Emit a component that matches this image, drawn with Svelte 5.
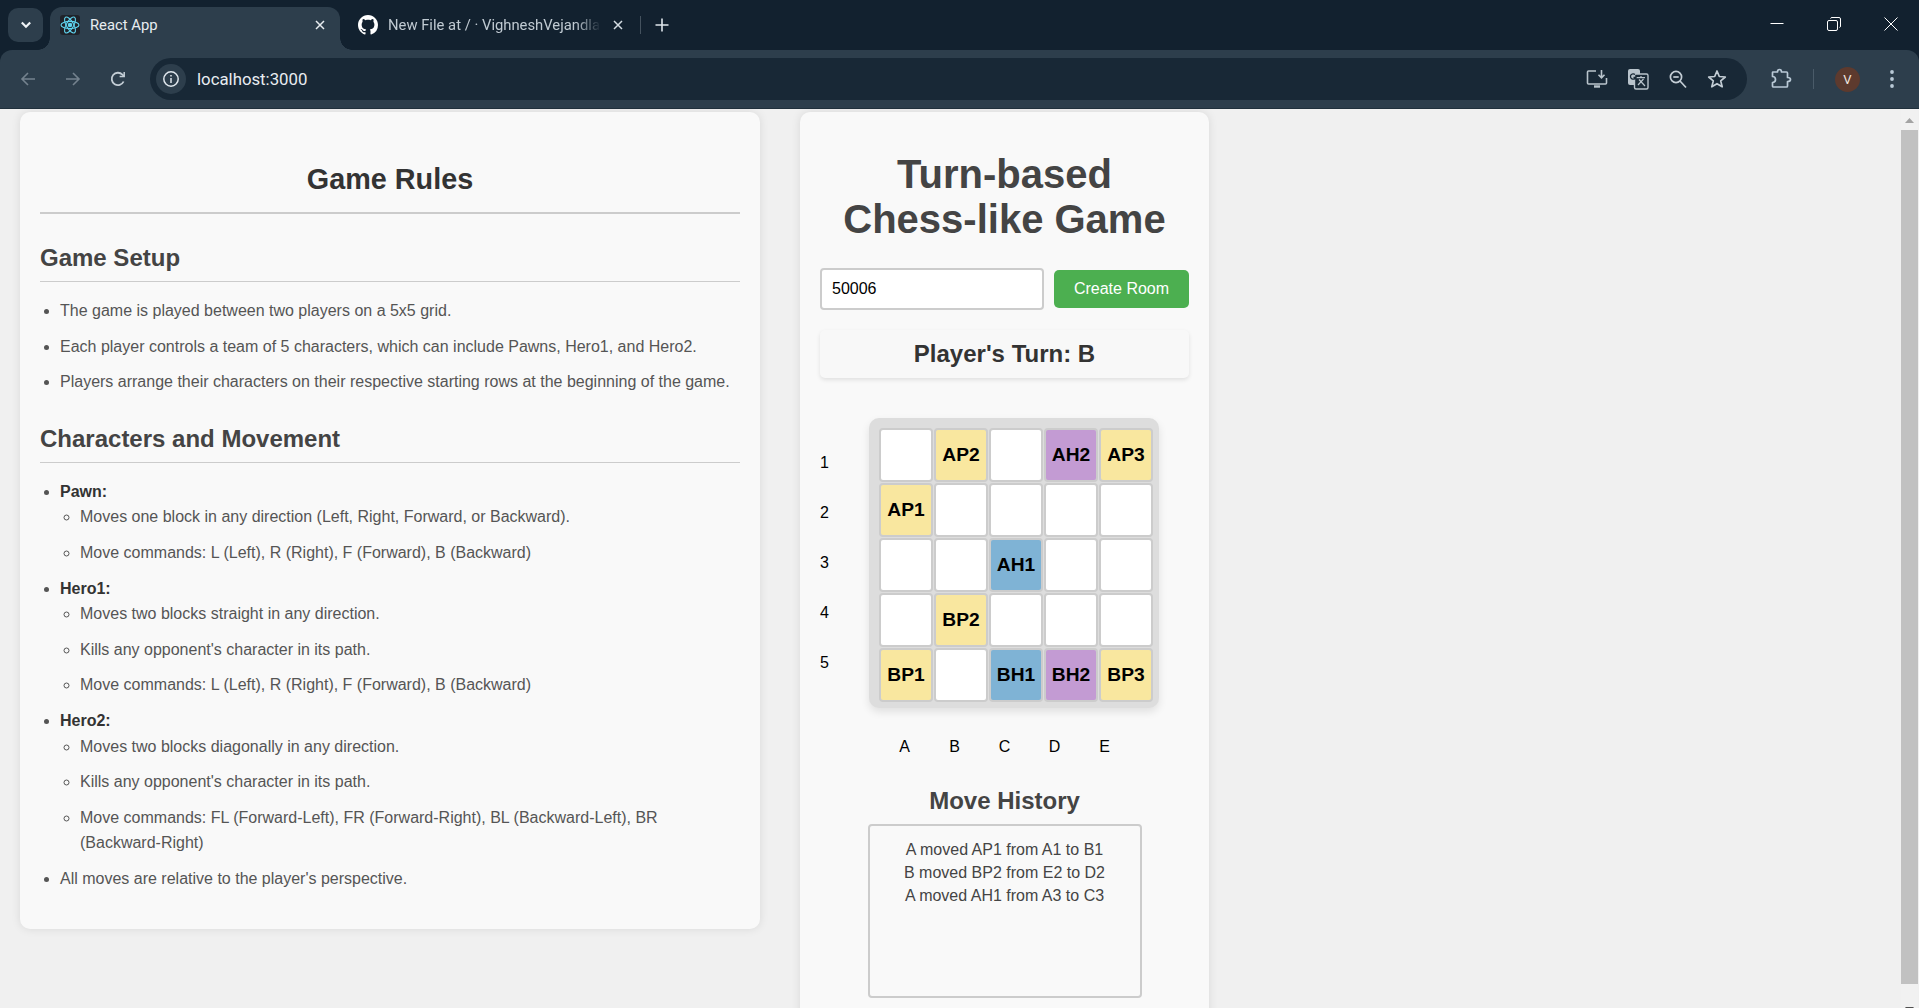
<script>
	const board = [
		['', 'AP2', '', 'AH2', 'AP3'],
		['AP1', '', '', '', ''],
		['', '', 'AH1', '', ''],
		['', 'BP2', '', '', ''],
		['BP1', '', 'BH1', 'BH2', 'BP3']
	];
	const rows = [1, 2, 3, 4, 5];
	const cols = ['A', 'B', 'C', 'D', 'E'];
	const moves = ['A moved AP1 from A1 to B1', 'B moved BP2 from E2 to D2', 'A moved AH1 from A3 to C3'];

	function kind(name) {
		if (name.includes('H1')) return 'hero1';
		if (name.includes('H2')) return 'hero2';
		return name ? 'pawn' : '';
	}
</script>

<div class="window">
	<header class="tabstrip">
		<button class="expander" aria-label="Search tabs">
			<svg width="12" height="8" viewBox="0 0 12 8"><path d="M1.800 1.500 6 5.700 10.200 1.500" fill="none" stroke="#f0f4f7" stroke-width="2.200"/></svg>
		</button>
		<div class="tab active">
			<span class="favicon">
				<svg width="20" height="20" viewBox="0 0 20 20" fill="none" stroke="#5fd3ee" stroke-width="1.100">
					<ellipse cx="10" cy="10" rx="9" ry="3.600"/>
					<ellipse cx="10" cy="10" rx="9" ry="3.600" transform="rotate(60 10 10)"/>
					<ellipse cx="10" cy="10" rx="9" ry="3.600" transform="rotate(120 10 10)"/>
					<circle cx="10" cy="10" r="1.700" fill="#5fd3ee"/>
				</svg>
			</span>
			<span class="tab-title">React App</span>
			<svg class="tab-x" width="10" height="10" viewBox="0 0 10 10"><path d="M1 1 9 9M9 1 1 9" stroke="#e8edf1" stroke-width="1.500"/></svg>
		</div>
		<div class="tab">
			<svg class="gh" width="20" height="20" viewBox="0 0 16 16"><path fill="#fff" d="M8 0C3.580 0 0 3.580 0 8c0 3.540 2.290 6.530 5.470 7.590.4.070.55-.17.55-.38 0-.19-.01-.82-.01-1.490-2.010.37-2.530-.49-2.690-.94-.09-.23-.48-.94-.82-1.130-.28-.15-.68-.52-.01-.53.63-.01 1.080.58 1.230.82.72 1.210 1.870.87 2.330.66.070-.52.28-.87.51-1.070-1.780-.2-3.640-.89-3.640-3.950 0-.87.31-1.590.82-2.150-.08-.2-.36-1.020.08-2.120 0 0 .67-.21 2.200.82.64-.18 1.320-.27 2-.27s1.360.09 2 .27c1.530-1.040 2.200-.82 2.200-.82.44 1.100.16 1.920.08 2.120.51.56.82 1.270.82 2.150 0 3.070-1.870 3.750-3.650 3.950.29.25.54.73.54 1.480 0 1.070-.01 1.930-.01 2.200 0 .21.15.46.55.38A8.010 8.010 0 0 0 16 8c0-4.420-3.580-8-8-8z"/></svg>
			<span class="tab-title faded">New File at / · VighneshVejandla</span>
			<svg class="tab-x" width="10" height="10" viewBox="0 0 10 10"><path d="M1 1 9 9M9 1 1 9" stroke="#d5dde3" stroke-width="1.500"/></svg>
		</div>
		<span class="tab-sep"></span>
		<svg class="plus" width="14" height="14" viewBox="0 0 14 14"><path d="M7 0.500V13.500M0.500 7H13.500" stroke="#dfe6ec" stroke-width="1.600"/></svg>
		<div class="winctl">
			<svg width="14" height="14" viewBox="0 0 14 14"><path d="M0.500 6.500H13.500" stroke="#fff" stroke-width="1"/></svg>
			<svg width="14" height="14" viewBox="0 0 14 14" fill="none" stroke="#fff"><rect x="0.500" y="3.500" width="10" height="10" rx="1.500"/><path d="M3.500 1.500Q3.800 0.500 5 0.500H12Q13.500 0.500 13.500 2V9Q13.500 10.200 12.500 10.500"/></svg>
			<svg width="14" height="14" viewBox="0 0 14 14"><path d="M0.500 0.500 13.500 13.500M13.500 0.500 0.500 13.500" stroke="#fff" stroke-width="1"/></svg>
		</div>
	</header>

	<nav class="toolbar">
		<svg class="nav" width="18" height="18" viewBox="0 0 18 18" fill="none" stroke="#74828e" stroke-width="1.600"><path d="M16 9H3M9 3 3 9 9 15"/></svg>
		<svg class="nav" width="18" height="18" viewBox="0 0 18 18" fill="none" stroke="#74828e" stroke-width="1.600"><path d="M2 9H15M9 3 15 9 9 15"/></svg>
		<svg class="nav" width="18" height="18" viewBox="0 0 18 18" fill="none" stroke="#c3cdd5" stroke-width="1.800"><path d="M14.600 11.500A6.200 6.200 0 1 1 13.400 4.600L15 6.200"/><path d="M15.200 2V6.600H10.600" stroke-width="1.500"/></svg>
		<div class="omnibox">
			<span class="info">
				<svg width="18" height="18" viewBox="0 0 18 18" fill="none" stroke="#dfe6ec" stroke-width="1.500"><circle cx="9" cy="9" r="7.200"/><path d="M9 8V13M9 5V6.600"/></svg>
			</span>
			<span class="url">localhost:3000</span>
			<div class="omni-icons">
				<svg width="22" height="22" viewBox="0 0 22 22" fill="none" stroke="#b9c4cc" stroke-width="1.600"><path d="M10 3H2.500Q1.500 3 1.500 4V15Q1.500 16 2.500 16H19.500Q20.500 16 20.500 15V10"/><path d="M8 18.500H14" stroke-width="2.400"/><path d="M15.500 2V9.500M12.500 6.800 15.500 9.800 18.500 6.800"/></svg>
				<svg width="22" height="22" viewBox="0 0 22 22"><rect x="1" y="1" width="12" height="16" rx="2" fill="#b9c4cc"/><rect x="7.500" y="6" width="13.500" height="15" rx="1.500" fill="#1a2a37" stroke="#b9c4cc" stroke-width="1.400"/><path d="M9.500 9.600H18M14 8V9.600M11 17 16.500 11M12 11.500 18 18" stroke="#b9c4cc" stroke-width="1.200" fill="none"/><path d="M8 6.500A2.700 2.700 0 1 0 8.700 9.500H6.500" stroke="#1a2a37" stroke-width="1.300" fill="none"/></svg>
				<svg width="20" height="20" viewBox="0 0 20 20" fill="none" stroke="#c3cdd5" stroke-width="1.700"><circle cx="8" cy="8" r="5.600"/><path d="M12 12 18 18.500" /><path d="M5.300 8H10.700"/></svg>
				<svg width="20" height="20" viewBox="0 0 20 20" fill="none" stroke="#c3cdd5" stroke-width="1.700"><path d="M10 2 12.300 7.500 18.300 8 13.700 11.900 15.200 17.800 10 14.700 4.800 17.800 6.300 11.900 1.700 8 7.700 7.500Z" stroke-linejoin="round"/></svg>
			</div>
		</div>
		<svg class="puzzle" width="22" height="22" viewBox="0 0 22 22" fill="none" stroke="#b9c9d6" stroke-width="1.700"><path d="M3 4H7.500Q7.500 1.500 9.500 1.500T11.500 4H16.500Q17.500 4 17.500 5V9.500Q20.500 9.500 20.500 11.500T17.500 13.500V18Q17.500 19 16.500 19H3.500Q2.500 19 2.500 18V14.500Q5.500 14.500 5.500 11.500T2.500 8.500V4.500Q2.500 4 3 4Z" stroke-linejoin="round"/></svg>
		<span class="tool-sep"></span>
		<span class="avatar">V</span>
		<svg class="dots" width="6" height="20" viewBox="0 0 6 20" fill="#b9c9d6"><circle cx="3" cy="3" r="1.900"/><circle cx="3" cy="10" r="1.900"/><circle cx="3" cy="17" r="1.900"/></svg>
	</nav>

	<div class="viewport">
		<main class="page">
			<section class="card rules">
				<h1>Game Rules</h1>
				<h2>Game Setup</h2>
				<ul>
					<li>The game is played between two players on a 5x5 grid.</li>
					<li>Each player controls a team of 5 characters, which can include Pawns, Hero1, and Hero2.</li>
					<li>Players arrange their characters on their respective starting rows at the beginning of the game.</li>
				</ul>
				<h2>Characters and Movement</h2>
				<ul>
					<li>
						<strong>Pawn:</strong>
						<ul>
							<li>Moves one block in any direction (Left, Right, Forward, or Backward).</li>
							<li>Move commands: L (Left), R (Right), F (Forward), B (Backward)</li>
						</ul>
					</li>
					<li>
						<strong>Hero1:</strong>
						<ul>
							<li>Moves two blocks straight in any direction.</li>
							<li>Kills any opponent's character in its path.</li>
							<li>Move commands: L (Left), R (Right), F (Forward), B (Backward)</li>
						</ul>
					</li>
					<li>
						<strong>Hero2:</strong>
						<ul>
							<li>Moves two blocks diagonally in any direction.</li>
							<li>Kills any opponent's character in its path.</li>
							<li>Move commands: FL (Forward-Left), FR (Forward-Right), BL (Backward-Left), BR (Backward-Right)</li>
						</ul>
					</li>
					<li>All moves are relative to the player's perspective.</li>
				</ul>
			</section>

			<section class="card game">
				<h1 class="title">Turn-based<br />Chess-like Game</h1>
				<div class="room">
					<input type="text" value="50006" />
					<button class="create">Create Room</button>
				</div>
				<div class="turn">Player's Turn: B</div>
				<div class="board-wrap">
					<div class="row-labels">
						{#each rows as r}
							<span>{r}</span>
						{/each}
					</div>
					<div class="board">
						{#each board as row}
							{#each row as name}
								<div class="cell {kind(name)}">{name}</div>
							{/each}
						{/each}
					</div>
				</div>
				<div class="col-labels">
					{#each cols as c}
						<span>{c}</span>
					{/each}
				</div>
				<h2 class="history-title">Move History</h2>
				<div class="history">
					{#each moves as m}
						<div>{m}</div>
					{/each}
				</div>
			</section>
		</main>

		<aside class="scrollbar">
			<svg class="arrow-up" width="17" height="21" viewBox="0 0 17 21"><path d="M8.500 9 13 14H4Z" fill="#a3a3a3"/></svg>
			<div class="thumb"></div>
			<svg class="arrow-down" width="17" height="8" viewBox="0 0 17 8"><path d="M4 0H13L8.500 5Z" fill="#505050"/></svg>
		</aside>
	</div>
</div>

<style>
	:global(body) {
		margin: 0;
		overflow: hidden;
	}
	.window {
		width: 1919px;
		height: 1008px;
		display: flex;
		flex-direction: column;
		overflow: hidden;
		font-family: "Liberation Sans", Arial, sans-serif;
		background: #12212f;
	}

	.tabstrip {
		height: 50px;
		flex: none;
		background: #12212f;
		display: flex;
		align-items: flex-end;
		font-family: Roboto, "Noto Sans", sans-serif;
	}
	.expander {
		width: 35px;
		height: 34px;
		margin: 0 7px 8px 8px;
		border: none;
		border-radius: 10px;
		background: #2d3e4c;
		display: flex;
		align-items: center;
		justify-content: center;
		padding: 0;
	}
	.tab {
		width: 290px;
		height: 43px;
		box-sizing: border-box;
		display: flex;
		align-items: center;
		padding: 0 15px 7px 10px;
		font-size: 14.800px;
		color: #e8edf1;
		border-radius: 12px 12px 0 0;
		position: relative;
	}
	.tab.active {
		background: #2d3e4c;
	}
	.tab.active::before,
	.tab.active::after {
		content: "";
		position: absolute;
		bottom: 0;
		width: 12px;
		height: 12px;
	}
	.tab.active::before {
		left: -12px;
		background: radial-gradient(circle at 0 0, transparent 11.500px, #2d3e4c 12px);
	}
	.tab.active::after {
		right: -12px;
		background: radial-gradient(circle at 100% 0, transparent 11.500px, #2d3e4c 12px);
	}
	.tab:not(.active) {
		width: 301px;
		padding-left: 18px;
		padding-right: 18px;
	}
	.favicon {
		width: 20px;
		height: 20px;
		background: #20232a;
		border-radius: 3px;
		flex: none;
		display: block;
		line-height: 0;
	}
	.gh {
		flex: none;
	}
	.tab-title {
		margin-left: 10px;
		flex: 1;
		white-space: nowrap;
		overflow: hidden;
	}
	.tab-title.faded {
		color: #c0cad2;
		-webkit-mask-image: linear-gradient(90deg, #000 88%, transparent);
		mask-image: linear-gradient(90deg, #000 88%, transparent);
	}
	.tab-x {
		flex: none;
		margin-left: 12px;
	}
	.tab-sep {
		width: 1px;
		height: 18px;
		background: #44525e;
		margin: 0 0 16px -1px;
	}
	.plus {
		margin: 0 0 18px 14px;
	}
	.winctl {
		margin-left: auto;
		display: flex;
		gap: 43px;
		padding: 0 21px 19px 0;
	}

	.toolbar {
		height: 58px;
		flex: none;
		background: #2d3e4c;
		border-radius: 12px 12px 0 0;
		display: flex;
		align-items: center;
		padding: 0 0 0 19px;
		border-bottom: 1px solid #20303c;
	}
	.nav {
		margin-right: 27px;
		flex: none;
	}
	.nav:nth-child(3) {
		margin-right: 23px;
	}
	.omnibox {
		width: 1597px;
		height: 42px;
		flex: none;
		background: #182836;
		border-radius: 21px;
		display: flex;
		align-items: center;
		box-sizing: border-box;
		padding-left: 6px;
	}
	.info {
		width: 30px;
		height: 30px;
		border-radius: 50%;
		background: #2d3e4c;
		display: flex;
		align-items: center;
		justify-content: center;
	}
	.url {
		margin-left: 11px;
		font-family: Roboto, "Noto Sans", sans-serif;
		font-size: 16.800px;
		color: #e8edf1;
	}
	.omni-icons {
		margin-left: auto;
		display: flex;
		align-items: center;
		gap: 19px;
		padding-right: 20px;
	}
	.puzzle {
		margin-left: 23px;
	}
	.tool-sep {
		width: 1px;
		height: 20px;
		background: #4a5b69;
		margin-left: 21px;
	}
	.avatar {
		width: 25px;
		height: 25px;
		margin-left: 21px;
		border-radius: 50%;
		background: #5d3a2e;
		color: #f0e6e0;
		font-family: Roboto, "Noto Sans", sans-serif;
		font-size: 13px;
		display: flex;
		align-items: center;
		justify-content: center;
	}
	.dots {
		margin-left: 29px;
	}

	.viewport {
		flex: 1;
		display: flex;
		min-height: 0;
		background: #f0f0f0;
	}
	.page {
		flex: 1;
		display: flex;
		align-items: flex-start;
		gap: 40px;
		padding: 3px 0 0 20px;
		overflow: hidden;
		line-height: 1.6;
		font-size: 16px;
	}
	.card {
		background: #f9f9f9;
		border-radius: 10px;
		box-shadow: 0 0 10px rgba(0, 0, 0, 0.1);
		box-sizing: border-box;
		padding: 20px;
		flex: none;
	}

	.rules {
		width: 740px;
		height: 817px;
	}
	.rules h1 {
		margin: 24px 0 25px;
		padding-bottom: 10px;
		font-size: 28.800px;
		line-height: 46px;
		text-align: center;
		color: #333;
		border-bottom: 2px solid #ccc;
	}
	.rules h2 {
		margin: 25px 0 16px;
		padding-bottom: 5px;
		font-size: 24px;
		line-height: 37px;
		color: #444;
		border-bottom: 1px solid #ccc;
	}
	.rules ul {
		margin: 0;
		padding-left: 20px;
		color: #555;
	}
	.rules li {
		margin-bottom: 10px;
	}
	.rules strong {
		color: #333;
	}

	.game {
		width: 409px;
		height: 1000px;
	}
	.title {
		margin: 20px 0 0;
		font-size: 40px;
		line-height: 45px;
		text-align: center;
		color: #444;
	}
	.room {
		display: flex;
		align-items: center;
		gap: 10px;
		margin-top: 26px;
	}
	input {
		width: 224px;
		height: 42px;
		box-sizing: border-box;
		border: 2px solid #ccc;
		border-radius: 4px;
		padding: 0 10px;
		font-family: inherit;
		font-size: 16px;
		color: #000;
		background: #fff;
		flex: none;
	}
	.create {
		width: 135px;
		height: 38px;
		border: none;
		border-radius: 5px;
		background: #4caf50;
		color: #fff;
		font-family: inherit;
		font-size: 16px;
		padding: 0;
		flex: none;
	}
	.turn {
		margin-top: 20px;
		height: 48px;
		border-radius: 5px;
		background: #f8f8f8;
		box-shadow: 0 2px 4px rgba(0, 0, 0, 0.1);
		font-size: 24px;
		font-weight: bold;
		color: #333;
		text-align: center;
		line-height: 48px;
	}
	.board-wrap {
		margin-top: 40px;
		display: flex;
		align-items: flex-start;
	}
	.row-labels {
		width: 49px;
		padding-top: 20px;
		flex: none;
		display: flex;
		flex-direction: column;
		color: #000;
	}
	.row-labels span {
		height: 50px;
		line-height: 50px;
	}
	.board {
		width: 290px;
		height: 290px;
		box-sizing: border-box;
		padding: 10px 6px 6px 10px;
		border-radius: 10px;
		background: #ddd;
		box-shadow: 0 4px 8px rgba(0, 0, 0, 0.1);
		display: grid;
		grid-template-columns: repeat(5, 54px);
		grid-template-rows: repeat(5, 54px);
		gap: 1px;
	}
	.cell {
		box-sizing: border-box;
		border: 2px solid #ccc;
		border-radius: 4px;
		background: #fff;
		display: flex;
		align-items: center;
		justify-content: center;
		font-size: 19.200px;
		font-weight: bold;
		color: #000;
	}
	.pawn {
		background: #f9e79f;
	}
	.hero1 {
		background: #7fb3d5;
	}
	.hero2 {
		background: #c39bd3;
	}
	.col-labels {
		display: flex;
		justify-content: center;
		margin-top: 26px;
		line-height: 26px;
		color: #000;
	}
	.col-labels span {
		width: 50px;
		text-align: center;
	}
	.history-title {
		margin: 22px 0 0;
		font-size: 24px;
		line-height: 37px;
		text-align: center;
		color: #444;
	}
	.history {
		width: 274px;
		height: 174px;
		margin: 5px auto 0;
		box-sizing: border-box;
		border: 2px solid #ccc;
		border-radius: 4px;
		padding-top: 12px;
		line-height: 23px;
		text-align: center;
		color: #444;
	}

	.scrollbar {
		width: 17px;
		height: 899px;
		flex: none;
		margin-right: 1px;
		background: #f1f1f1;
		display: flex;
		flex-direction: column;
		overflow: hidden;
	}
	.scrollbar svg {
		flex: none;
	}
	.thumb {
		height: 854px;
		flex: none;
		background: #c1c1c1;
	}
	.arrow-down {
		margin-top: 23px;
	}
</style>
